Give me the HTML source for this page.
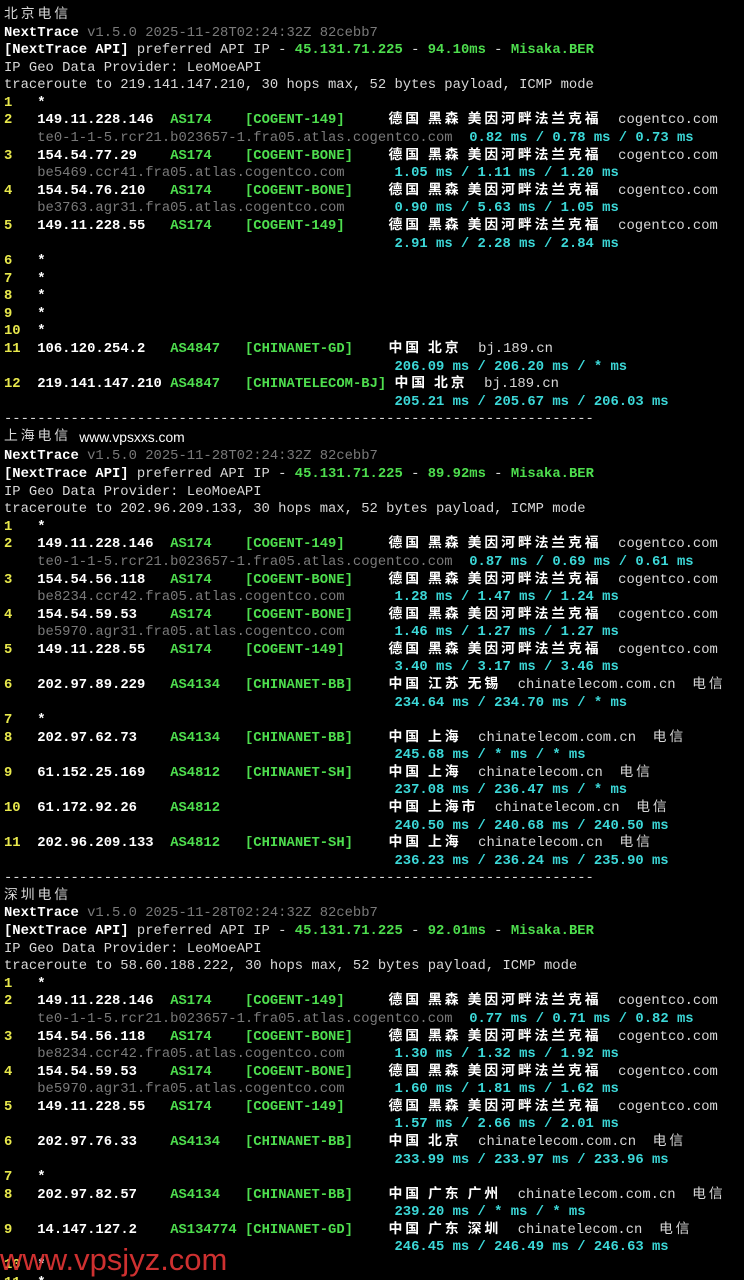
<!DOCTYPE html>
<html><head><meta charset="utf-8"><style>
html,body{margin:0;background:#000;width:744px;height:1280px;overflow:hidden}
pre{margin:0;padding:7px 0 0 4px;font-family:"Liberation Mono",monospace;font-size:13.85px;line-height:17.58px;color:#d8d8d8;white-space:pre}
.y{color:#e8e84c;font-weight:bold}.w{color:#fff;font-weight:bold}.g{color:#4ede4e;font-weight:bold}
.c{color:#3cd8d8;font-weight:bold}.d{color:#7a7a7a}
.z,.zw{font-family:"Noto Sans CJK SC",sans-serif;letter-spacing:2.9px;display:inline-block;height:17.58px;line-height:17.58px;vertical-align:top;font-size:13.85px;position:relative;top:-3px}
.zw{color:#fff;font-weight:bold;margin-left:-6px}
.wm{position:absolute;left:0;top:1242px;font-family:"Liberation Sans",sans-serif;font-size:31px;color:#e03535;opacity:.92}
</style></head><body><pre><span class="z">北京电信</span>
<span class="w">NextTrace</span> <span class="d">v1.5.0 2025-11-28T02:24:32Z 82cebb7</span>
<span class="w">[NextTrace API]</span> preferred API IP - <span class="g">45.131.71.225</span> - <span class="g">94.10ms</span> - <span class="g">Misaka.BER</span>
IP Geo Data Provider: LeoMoeAPI
traceroute to 219.141.147.210, 30 hops max, 52 bytes payload, ICMP mode
<span class="y">1</span>   <span class="w">*</span>
<span class="y">2</span>   <span class="w">149.11.228.146</span>  <span class="g">AS174</span>    <span class="g">[COGENT-149]</span>      <span class="zw">德国 黑森 美因河畔法兰克福</span>  cogentco.com
    <span class="d">te0-1-1-5.rcr21.b023657-1.fra05.atlas.cogentco.com</span>  <span class="c">0.82 ms / 0.78 ms / 0.73 ms</span>
<span class="y">3</span>   <span class="w">154.54.77.29</span>    <span class="g">AS174</span>    <span class="g">[COGENT-BONE]</span>     <span class="zw">德国 黑森 美因河畔法兰克福</span>  cogentco.com
    <span class="d">be5469.ccr41.fra05.atlas.cogentco.com</span>      <span class="c">1.05 ms / 1.11 ms / 1.20 ms</span>
<span class="y">4</span>   <span class="w">154.54.76.210</span>   <span class="g">AS174</span>    <span class="g">[COGENT-BONE]</span>     <span class="zw">德国 黑森 美因河畔法兰克福</span>  cogentco.com
    <span class="d">be3763.agr31.fra05.atlas.cogentco.com</span>      <span class="c">0.90 ms / 5.63 ms / 1.05 ms</span>
<span class="y">5</span>   <span class="w">149.11.228.55</span>   <span class="g">AS174</span>    <span class="g">[COGENT-149]</span>      <span class="zw">德国 黑森 美因河畔法兰克福</span>  cogentco.com
                                               <span class="c">2.91 ms / 2.28 ms / 2.84 ms</span>
<span class="y">6</span>   <span class="w">*</span>
<span class="y">7</span>   <span class="w">*</span>
<span class="y">8</span>   <span class="w">*</span>
<span class="y">9</span>   <span class="w">*</span>
<span class="y">10</span>  <span class="w">*</span>
<span class="y">11</span>  <span class="w">106.120.254.2</span>   <span class="g">AS4847</span>   <span class="g">[CHINANET-GD]</span>     <span class="zw">中国 北京</span>  bj.189.cn
                                               <span class="c">206.09 ms / 206.20 ms / * ms</span>
<span class="y">12</span>  <span class="w">219.141.147.210</span> <span class="g">AS4847</span>   <span class="g">[CHINATELECOM-BJ]</span> <span class="zw" style="margin-left:0">中国 北京</span>  bj.189.cn
                                               <span class="c">205.21 ms / 205.67 ms / 206.03 ms</span>
-----------------------------------------------------------------------
<span class="z">上海电信</span> <span style="font-family:'Liberation Sans',sans-serif;color:#fff">www.vpsxxs.com</span>
<span class="w">NextTrace</span> <span class="d">v1.5.0 2025-11-28T02:24:32Z 82cebb7</span>
<span class="w">[NextTrace API]</span> preferred API IP - <span class="g">45.131.71.225</span> - <span class="g">89.92ms</span> - <span class="g">Misaka.BER</span>
IP Geo Data Provider: LeoMoeAPI
traceroute to 202.96.209.133, 30 hops max, 52 bytes payload, ICMP mode
<span class="y">1</span>   <span class="w">*</span>
<span class="y">2</span>   <span class="w">149.11.228.146</span>  <span class="g">AS174</span>    <span class="g">[COGENT-149]</span>      <span class="zw">德国 黑森 美因河畔法兰克福</span>  cogentco.com
    <span class="d">te0-1-1-5.rcr21.b023657-1.fra05.atlas.cogentco.com</span>  <span class="c">0.87 ms / 0.69 ms / 0.61 ms</span>
<span class="y">3</span>   <span class="w">154.54.56.118</span>   <span class="g">AS174</span>    <span class="g">[COGENT-BONE]</span>     <span class="zw">德国 黑森 美因河畔法兰克福</span>  cogentco.com
    <span class="d">be8234.ccr42.fra05.atlas.cogentco.com</span>      <span class="c">1.28 ms / 1.47 ms / 1.24 ms</span>
<span class="y">4</span>   <span class="w">154.54.59.53</span>    <span class="g">AS174</span>    <span class="g">[COGENT-BONE]</span>     <span class="zw">德国 黑森 美因河畔法兰克福</span>  cogentco.com
    <span class="d">be5970.agr31.fra05.atlas.cogentco.com</span>      <span class="c">1.46 ms / 1.27 ms / 1.27 ms</span>
<span class="y">5</span>   <span class="w">149.11.228.55</span>   <span class="g">AS174</span>    <span class="g">[COGENT-149]</span>      <span class="zw">德国 黑森 美因河畔法兰克福</span>  cogentco.com
                                               <span class="c">3.40 ms / 3.17 ms / 3.46 ms</span>
<span class="y">6</span>   <span class="w">202.97.89.229</span>   <span class="g">AS4134</span>   <span class="g">[CHINANET-BB]</span>     <span class="zw">中国 江苏 无锡</span>  chinatelecom.com.cn  <span class="z">电信</span>
                                               <span class="c">234.64 ms / 234.70 ms / * ms</span>
<span class="y">7</span>   <span class="w">*</span>
<span class="y">8</span>   <span class="w">202.97.62.73</span>    <span class="g">AS4134</span>   <span class="g">[CHINANET-BB]</span>     <span class="zw">中国 上海</span>  chinatelecom.com.cn  <span class="z">电信</span>
                                               <span class="c">245.68 ms / * ms / * ms</span>
<span class="y">9</span>   <span class="w">61.152.25.169</span>   <span class="g">AS4812</span>   <span class="g">[CHINANET-SH]</span>     <span class="zw">中国 上海</span>  chinatelecom.cn  <span class="z">电信</span>
                                               <span class="c">237.08 ms / 236.47 ms / * ms</span>
<span class="y">10</span>  <span class="w">61.172.92.26</span>    <span class="g">AS4812</span>                     <span class="zw">中国 上海市</span>  chinatelecom.cn  <span class="z">电信</span>
                                               <span class="c">240.50 ms / 240.68 ms / 240.50 ms</span>
<span class="y">11</span>  <span class="w">202.96.209.133</span>  <span class="g">AS4812</span>   <span class="g">[CHINANET-SH]</span>     <span class="zw">中国 上海</span>  chinatelecom.cn  <span class="z">电信</span>
                                               <span class="c">236.23 ms / 236.24 ms / 235.90 ms</span>
-----------------------------------------------------------------------
<span class="z">深圳电信</span>
<span class="w">NextTrace</span> <span class="d">v1.5.0 2025-11-28T02:24:32Z 82cebb7</span>
<span class="w">[NextTrace API]</span> preferred API IP - <span class="g">45.131.71.225</span> - <span class="g">92.01ms</span> - <span class="g">Misaka.BER</span>
IP Geo Data Provider: LeoMoeAPI
traceroute to 58.60.188.222, 30 hops max, 52 bytes payload, ICMP mode
<span class="y">1</span>   <span class="w">*</span>
<span class="y">2</span>   <span class="w">149.11.228.146</span>  <span class="g">AS174</span>    <span class="g">[COGENT-149]</span>      <span class="zw">德国 黑森 美因河畔法兰克福</span>  cogentco.com
    <span class="d">te0-1-1-5.rcr21.b023657-1.fra05.atlas.cogentco.com</span>  <span class="c">0.77 ms / 0.71 ms / 0.82 ms</span>
<span class="y">3</span>   <span class="w">154.54.56.118</span>   <span class="g">AS174</span>    <span class="g">[COGENT-BONE]</span>     <span class="zw">德国 黑森 美因河畔法兰克福</span>  cogentco.com
    <span class="d">be8234.ccr42.fra05.atlas.cogentco.com</span>      <span class="c">1.30 ms / 1.32 ms / 1.92 ms</span>
<span class="y">4</span>   <span class="w">154.54.59.53</span>    <span class="g">AS174</span>    <span class="g">[COGENT-BONE]</span>     <span class="zw">德国 黑森 美因河畔法兰克福</span>  cogentco.com
    <span class="d">be5970.agr31.fra05.atlas.cogentco.com</span>      <span class="c">1.60 ms / 1.81 ms / 1.62 ms</span>
<span class="y">5</span>   <span class="w">149.11.228.55</span>   <span class="g">AS174</span>    <span class="g">[COGENT-149]</span>      <span class="zw">德国 黑森 美因河畔法兰克福</span>  cogentco.com
                                               <span class="c">1.57 ms / 2.66 ms / 2.01 ms</span>
<span class="y">6</span>   <span class="w">202.97.76.33</span>    <span class="g">AS4134</span>   <span class="g">[CHINANET-BB]</span>     <span class="zw">中国 北京</span>  chinatelecom.com.cn  <span class="z">电信</span>
                                               <span class="c">233.99 ms / 233.97 ms / 233.96 ms</span>
<span class="y">7</span>   <span class="w">*</span>
<span class="y">8</span>   <span class="w">202.97.82.57</span>    <span class="g">AS4134</span>   <span class="g">[CHINANET-BB]</span>     <span class="zw">中国 广东 广州</span>  chinatelecom.com.cn  <span class="z">电信</span>
                                               <span class="c">239.20 ms / * ms / * ms</span>
<span class="y">9</span>   <span class="w">14.147.127.2</span>    <span class="g">AS134774</span> <span class="g">[CHINANET-GD]</span>     <span class="zw">中国 广东 深圳</span>  chinatelecom.cn  <span class="z">电信</span>
                                               <span class="c">246.45 ms / 246.49 ms / 246.63 ms</span>
<span class="y">10</span>  <span class="w">*</span>
<span class="y">11</span>  <span class="w">*</span>
</pre><div class="wm">www.vpsjyz.com</div></body></html>
